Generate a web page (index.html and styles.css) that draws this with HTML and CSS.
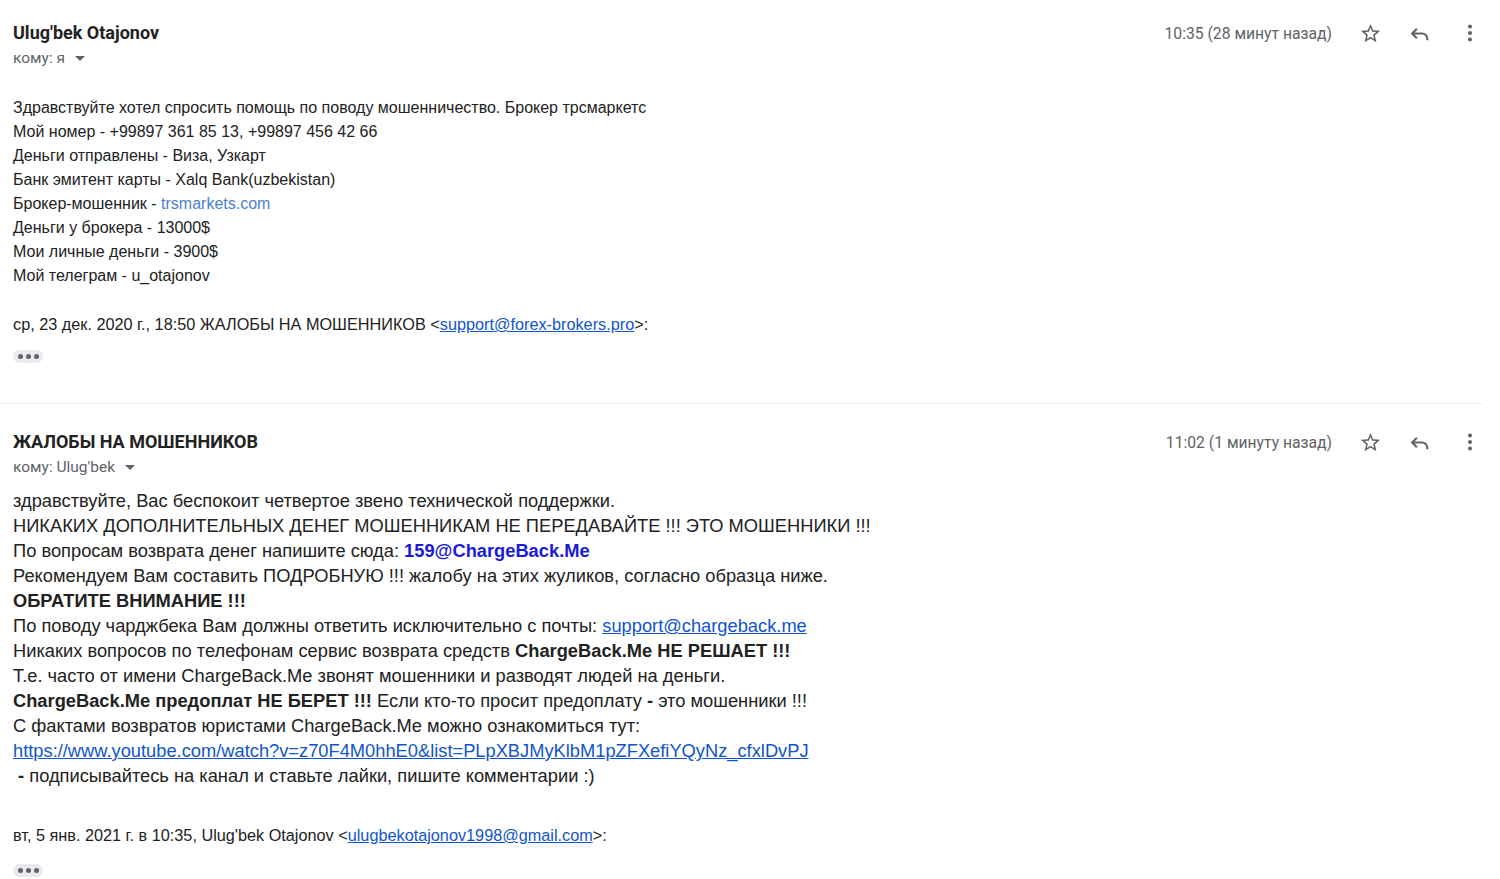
FILE: index.html
```html
<!DOCTYPE html>
<html lang="ru">
<head>
    <meta charset="UTF-8">
    <title>Письмо</title>
    <link rel="stylesheet" href="styles.css">
</head>
<body>
    <div class="message">
        <div class="msg-head">
            <div class="who">
                <div class="sender">Ulug'bek Otajonov</div>
                <div class="to">кому: я <span class="caret"></span></div>
            </div>
            <div class="actions">
                <span class="time">10:35 (28 минут назад)</span>
                <span class="icon"><svg viewBox="0 0 24 24" width="23" height="23"><path fill="#5f6368" d="M22 9.24l-7.19-.62L12 2 9.19 8.63 2 9.24l5.46 4.73L5.82 21 12 17.27 18.18 21l-1.63-7.03L22 9.24zM12 15.4l-3.76 2.27 1-4.28-3.32-2.88 4.38-.38L12 6.1l1.71 4.04 4.38.38-3.32 2.88 1 4.28L12 15.4z"/></svg></span>
                <span class="icon"><svg viewBox="0 0 24 24" width="25" height="25"><path fill="none" stroke="#5f6368" stroke-width="2" d="M8.5 7.5 4 12l4.5 4.5M4 12h9.5a5 5 0 0 1 5 5v1.5"/></svg></span>
                <span class="icon"><svg viewBox="0 0 24 24" width="24" height="24"><circle cx="12" cy="5.5" r="2" fill="#5f6368"/><circle cx="12" cy="12" r="2" fill="#5f6368"/><circle cx="12" cy="18.5" r="2" fill="#5f6368"/></svg></span>
            </div>
        </div>
        <div class="body small">
            <p>Здравствуйте хотел спросить помощь по поводу мошенничество. Брокер трсмаркетс<br>
            Мой номер - +99897 361 85 13, +99897 456 42 66<br>
            Деньги отправлены - Виза, Узкарт<br>
            Банк эмитент карты - Xalq Bank(uzbekistan)<br>
            Брокер-мошенник - <a class="plain" href="#">trsmarkets.com</a><br>
            Деньги у брокера - 13000$<br>
            Мои личные деньги - 3900$<br>
            Мой телеграм - u_otajonov</p>
            <p class="quote-line">ср, 23 дек. 2020 г., 18:50 ЖАЛОБЫ НА МОШЕННИКОВ &lt;<a href="#">support@forex-brokers.pro</a>&gt;:</p>
            <div class="dots"><i></i><i></i><i></i></div>
        </div>
    </div>

    <div class="message second">
        <div class="msg-head">
            <div class="who">
                <div class="sender">ЖАЛОБЫ НА МОШЕННИКОВ</div>
                <div class="to">кому: Ulug'bek <span class="caret"></span></div>
            </div>
            <div class="actions">
                <span class="time">11:02 (1 минуту назад)</span>
                <span class="icon"><svg viewBox="0 0 24 24" width="23" height="23"><path fill="#5f6368" d="M22 9.24l-7.19-.62L12 2 9.19 8.63 2 9.24l5.46 4.73L5.82 21 12 17.27 18.18 21l-1.63-7.03L22 9.24zM12 15.4l-3.76 2.27 1-4.28-3.32-2.88 4.38-.38L12 6.1l1.71 4.04 4.38.38-3.32 2.88 1 4.28L12 15.4z"/></svg></span>
                <span class="icon"><svg viewBox="0 0 24 24" width="25" height="25"><path fill="none" stroke="#5f6368" stroke-width="2" d="M8.5 7.5 4 12l4.5 4.5M4 12h9.5a5 5 0 0 1 5 5v1.5"/></svg></span>
                <span class="icon"><svg viewBox="0 0 24 24" width="24" height="24"><circle cx="12" cy="5.5" r="2" fill="#5f6368"/><circle cx="12" cy="12" r="2" fill="#5f6368"/><circle cx="12" cy="18.5" r="2" fill="#5f6368"/></svg></span>
            </div>
        </div>
        <div class="body large">
            <p>здравствуйте, Вас беспокоит четвертое звено технической поддержки.<br>
            НИКАКИХ ДОПОЛНИТЕЛЬНЫХ ДЕНЕГ МОШЕННИКАМ НЕ ПЕРЕДАВАЙТЕ !!! ЭТО МОШЕННИКИ !!!<br>
            По вопросам возврата денег напишите сюда: <b class="blue">159@ChargeBack.Me</b><br>
            Рекомендуем Вам составить ПОДРОБНУЮ !!! жалобу на этих жуликов, согласно образца ниже.<br>
            <b>ОБРАТИТЕ ВНИМАНИЕ !!!</b><br>
            По поводу чарджбека Вам должны ответить исключительно с почты: <a href="#">support@chargeback.me</a><br>
            Никаких вопросов по телефонам сервис возврата средств <b>ChargeBack.Me НЕ РЕШАЕТ !!!</b><br>
            Т.е. часто от имени ChargeBack.Me звонят мошенники и разводят людей на деньги.<br>
            <b>ChargeBack.Me предоплат НЕ БЕРЕТ !!!</b> Если кто-то просит предоплату <b>-</b> это мошенники !!!<br>
            С фактами возвратов юристами ChargeBack.Me можно ознакомиться тут:<br>
            <a href="#">https://www.youtube.com/watch?v=z70F4M0hhE0&amp;list=PLpXBJMyKlbM1pZFXefiYQyNz_cfxlDvPJ</a><br>
            &nbsp;<b>-</b> подписывайтесь на канал и ставьте лайки, пишите комментарии :)</p>
            <p class="quote-line">вт, 5 янв. 2021 г. в 10:35, Ulug'bek Otajonov &lt;<a href="#">ulugbekotajonov1998@gmail.com</a>&gt;:</p>
            <div class="dots"><i></i><i></i><i></i></div>
        </div>
    </div>
</body>
</html>
```

FILE: styles.css
```css
body {
    margin: 0;
    background: #fff;
    color: #222;
    font-family: Roboto, "Liberation Sans", Arial, sans-serif;
}
.message {
    padding: 0 5px 0 13px;
}
.message.second {
    border-top: 1px solid #efefef;
    margin-right: 17px;
    padding-right: 0;
}
.msg-head {
    display: flex;
    justify-content: space-between;
    align-items: flex-start;
    padding-top: 22px;
}
.second .msg-head {
    padding-top: 27px;
}
.sender {
    font-weight: bold;
    font-size: 18px;
    line-height: 22px;
    color: #222;
}
.to {
    margin-top: 4px;
    font-size: 15.5px;
    line-height: 20px;
    color: #5f6368;
}
.caret {
    display: inline-block;
    margin-left: 6px;
    vertical-align: middle;
    border-left: 5px solid transparent;
    border-right: 5px solid transparent;
    border-top: 5px solid #5f6368;
}
.actions {
    display: flex;
    align-items: center;
    height: 22px;
}
.time {
    font-size: 15.7px;
    color: #5f6368;
    margin-right: 13px;
}
.second .actions {
    margin-right: -12px;
}
.icon {
    width: 50px;
    display: flex;
    justify-content: center;
}
.body {
    font-family: "Liberation Sans", Arial, sans-serif;
    color: #222;
}
.body p {
    margin: 0;
}
.body a {
    color: #1155cc;
}
.body a.plain {
    color: #4a7fcf;
    text-decoration: none;
}
.small {
    padding-top: 28px;
    font-size: 16px;
    line-height: 24px;
}
.small .quote-line {
    margin-top: 24px;
    font-size: 16.25px;
}
.large {
    padding-top: 11px;
    font-size: 18.3px;
    line-height: 25px;
}
.large .quote-line {
    margin-top: 35px;
    font-size: 16.25px;
}
.blue {
    color: #1a1ad6;
}
.dots {
    display: flex;
    gap: 3px;
    width: 30px;
    height: 13px;
    margin-top: 16px;
    align-items: center;
    justify-content: center;
    background: #e8eaed;
    border-radius: 7px;
}
.dots i {
    width: 5px;
    height: 5px;
    border-radius: 50%;
    background: #5f6368;
}
.small .dots {
    margin-top: 14px;
    margin-bottom: 40px;
}
```
